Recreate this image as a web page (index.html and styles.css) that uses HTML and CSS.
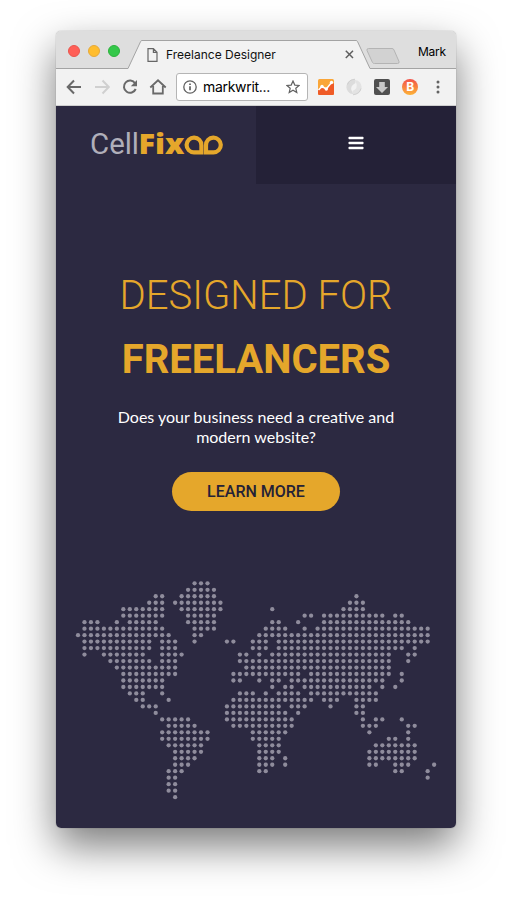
FILE: index.html
```html
<!DOCTYPE html>
<html lang="en">
<head>
<meta charset="utf-8">
<title>Freelance Designer</title>
<link rel="stylesheet" href="styles.css">
</head>
<body>
<div class="window">
  <header class="tabbar">
    <svg class="tab-shape" width="400" height="38" viewBox="0 0 400 38">
      <path d="M0 37.5H72L84.600 15.500Q85 14.500 86 14.500H300Q301 14.500 301.500 15.500L314 37.500H400V38H0Z" fill="#f2f2f2"/>
      <path d="M0 37.500H72L84.600 10.500Q85 9.500 86 9.500H300Q301 9.500 301.500 10.500L314 37.500H400" fill="#f2f2f2" stroke="#a3a3a3"/>
      <path d="M312.500 17.500H336Q337.500 17.500 338 19L343 30.500Q343.500 32.500 341.500 32.500H318.500Q317 32.500 316.500 31.500L311 19.500Q310.500 17.500 312.500 17.500Z" fill="#d2d2d2" stroke="#b4b4b4"/>
    </svg>
    <div class="lights"><i class="light red"></i><i class="light yellow"></i><i class="light green"></i></div>
    <div class="tab">
      <svg width="11" height="14" viewBox="0 0 11 14" fill="none" stroke="#666" stroke-width="1.200"><path d="M1 .7H6.400L10 4.300V13.300H1ZM6.400 .7V4.300H10"/></svg>
      <span class="tab-title">Freelance Designer</span>
      <svg width="9" height="9" viewBox="0 0 9 9" stroke="#5f5f5f" stroke-width="1.500"><path d="M.8.8L8 8M8 .8L.8 8"/></svg>
    </div>
    <span class="profile">Mark</span>
  </header>
  <div class="toolbar">
    <svg class="nav-icons" width="116" height="36" viewBox="0 0 116 36" fill="none" stroke="#696969" stroke-width="2">
      <path d="M25 18H12M18 11.500L11.700 18L18 24.500"/>
      <path d="M39 18H52M46.500 11.500L52.800 18L46.500 24.500" stroke="#d0d0d0"/>
      <path d="M79.100 14.200A6.100 6.100 0 1 0 79.700 20"/>
      <path d="M81 11V17.200H74.800Z" fill="#696969" stroke="none"/>
      <path d="M94.300 18.500L102 11.300L109.700 18.500M97.200 17V24.500H106.800V17" stroke-width="1.800"/>
    </svg>
    <div class="address">
      <svg width="14" height="14" viewBox="0 0 14 14" fill="none" stroke="#606060" stroke-width="1.300"><circle cx="7" cy="7" r="6.200"/><path d="M7 6.200V10.300M7 3.500V5.100" stroke-width="1.700"/></svg>
      <span class="url">markwrit...</span>
      <svg width="14" height="14" viewBox="0 0 14 14" fill="none" stroke="#616161" stroke-width="1.200"><path d="M7 1L8.800 5.100L13.100 5.500L9.800 8.300L10.800 12.600L7 10.300L3.200 12.600L4.200 8.300L.9 5.500L5.200 5.100Z"/></svg>
    </div>
    <svg class="extensions" width="148" height="36" viewBox="0 0 148 36">
      <rect x="10" y="10" width="16" height="16" rx="1.500" fill="#faa638"/>
      <path d="M10 21L14 17.500L18 20L24 13L26 15V24.500Q26 26 24.500 26H11.500Q10 26 10 24.500Z" fill="#ef5b27"/>
      <path d="M10.500 21L14 17.500L18.300 20L23.500 13.500" fill="none" stroke="#fff" stroke-width="1.500"/>
      <g fill="#fff"><circle cx="14" cy="17.500" r="1.700"/><circle cx="18.300" cy="20" r="1.700"/><circle cx="23.500" cy="13.500" r="1.700"/></g>
      <path d="M47 10.200C40 9.500 36 17 40 22.500Q42 25.300 45.500 25L43.800 22Q41.500 17 47.500 14Z" fill="#dcdcdc"/>
      <path d="M45 25.800C52 26.500 56 19 52 13.500Q50 10.700 46.500 11L48.200 14Q50.500 19 44.500 22Z" fill="#e3e3e3"/>
      <path d="M47 10.200Q41 10.500 39.500 15.500M45 25.800Q51.500 25 53 19.500" fill="none" stroke="#c9c9c9" stroke-width=".7"/>
      <rect x="66" y="10" width="16" height="16" rx="2" fill="#505050"/>
      <path d="M71.200 13H76.800V18H80L74 24L68 18H71.200Z" fill="#c9c9c9"/>
      <defs><linearGradient id="coin" x1="0" y1="0" x2="0" y2="1"><stop offset="0" stop-color="#f2524b"/><stop offset="1" stop-color="#fdb337"/></linearGradient></defs>
      <circle cx="102" cy="18" r="8" fill="url(#coin)"/>
      <text x="102.200" y="22.300" class="coin-letter">B</text>
      <g fill="#636363"><circle cx="130" cy="13" r="1.500"/><circle cx="130" cy="18" r="1.500"/><circle cx="130" cy="23" r="1.500"/></g>
    </svg>
  </div>
  <main class="page">
    <nav class="site-nav">
      <div class="brand">
        <svg width="138" height="52" viewBox="0 -12 138 52">
          <text class="logo-cell" x="0" y="26" textLength="49" lengthAdjust="spacingAndGlyphs">Cell</text>
          <text class="logo-fix" x="48.500" y="26" textLength="46" lengthAdjust="spacingAndGlyphs">Fix</text>
          <g fill="none" stroke="#e5a72b" stroke-width="4.200"><path d="M111.400 24.400H103.900A7.400 7.400 0 1 1 111.400 17.200Z"/><path d="M116 24.400V17.200A7.400 7.400 0 1 1 123.500 24.400Z"/></g>
        </svg>
      </div>
      <div class="menu"><svg width="16" height="14" viewBox="0 0 16 14" fill="#fff"><rect x=".5" y=".7" width="15" height="2.600" rx=".7"/><rect x=".5" y="5.700" width="15" height="2.600" rx=".7"/><rect x=".5" y="10.700" width="15" height="2.600" rx=".7"/></svg></div>
    </nav>
    <section class="hero">
      <h1 class="headline"><span class="thin">DESIGNED FOR</span><span class="bold">FREELANCERS</span></h1>
      <p class="intro">Does your business need a creative and<br>modern website?</p>
      <a class="cta">LEARN MORE</a>
      <svg class="map" id="map" width="362" height="222" viewBox="0 0 362 222"></svg>
    </section>
  </main>
</div>
<script src="map.js"></script>
</body>
</html>
```
FILE: styles.css
```css
* { box-sizing: border-box; }
body { display: flow-root; margin: 0; height: 908px; background: #fff; overflow: hidden; font-family: Inter, "Liberation Sans", sans-serif; }
.window { width: 400px; height: 797px; margin: 31px 0 0 56px; border-radius: 5px; box-shadow: 0 0 1px rgba(0,0,0,.5), 0 18px 42px rgba(0,0,0,.52); }
.tabbar { position: relative; display: flex; height: 38px; background: #dedede; border-radius: 5px 5px 0 0; }
.tab-shape { position: absolute; left: 0; top: 0; }
.lights { position: relative; display: flex; gap: 8px; padding: 14px 0 0 12px; width: 91px; }
.light { width: 12px; height: 12px; border-radius: 50%; border: 1px solid; }
.red { background: #ff5f57; border-color: #e9554d; }
.yellow { background: #ffbd2e; border-color: #e6a93a; }
.green { background: #34c84a; border-color: #2cb23c; }
.tab { position: relative; display: flex; align-items: center; width: 207px; height: 29px; margin-top: 9px; }
.tab-title { margin-left: 8px; width: 179px; font-size: 12px; line-height: 15px; color: #111; white-space: nowrap; }
.profile { position: relative; margin: 13px 0 0 64px; font-size: 12px; line-height: 15px; letter-spacing: -.3px; color: #000; }
.toolbar { display: flex; align-items: center; height: 37px; background: #f2f2f2; border-bottom: 1px solid #cfcfcf; }
.nav-icons { flex: none; }
.address { display: flex; align-items: center; width: 132px; height: 28px; margin-left: 4px; padding-left: 6px; background: #fff; border: 1px solid #b5b5b5; border-radius: 3px; }
.url { width: 83px; margin-left: 6px; font-size: 14px; letter-spacing: -.3px; line-height: 18px; color: #000; }
.address svg, .tab svg { flex: none; }
.extensions { flex: none; }
.coin-letter { font: bold 12px Inter, sans-serif; fill: #fff; text-anchor: middle; }
.page { height: 722px; background: #2c2941; border-radius: 0 0 5px 5px; }
.site-nav { display: grid; grid-template-columns: 1fr 1fr; height: 78px; }
.brand { padding: 10px 0 0 34px; }
.brand svg { display: block; }
.menu { display: flex; align-items: center; justify-content: center; background: #242137; padding-bottom: 4px; }
.logo-cell { font: 400 29px Roboto, sans-serif; fill: #b0afba; }
.logo-fix { font: 800 29px "Open Sans", sans-serif; fill: #e5a72b; }
.hero { display: flex; flex-direction: column; align-items: center; padding-top: 80px; }
.headline { display: flex; flex-direction: column; align-items: center; margin: 0; font-family: Roboto, sans-serif; font-size: 40px; line-height: 64px; color: #e5a72b; white-space: nowrap; }
.thin { font-weight: 300; }
.bold { font-weight: 700; }
.intro { margin: 15px 0 0; font: 16px/20px Lato, sans-serif; color: #fff; text-align: center; }
.cta { width: 168px; height: 39px; margin-top: 25px; border-radius: 20px; background: #e5a72b; color: #242137; font: 500 16px/39px Roboto, sans-serif; text-align: center; }
.map { margin-top: 67px; fill: #8f8c9c; }
```
FILE: map.js
```js
// Filled column spans of the dotted world map, one string per row.
const rows = [
  "18-20", "17-21", "12-13 16-21 43", "11-13 15-22 42-44",
  "7-13 16-22 30 41-44", "7-13 17-21 35-36 38-47 49-50",
  "1-3 6 8-12 17-21 30-31 34 38-51", "1-13 18-21 29-32 35 37-54",
  "0-14 18-19 28-54", "1-11 13-15 18 23-24 27-29 31-54",
  "1-11 13-15 27-29 31-50 52", "1 4-10 13-16 25-26 28 30-48 51-52",
  "5-11 13-15 25-48 51", "6-15 26-48", "7-15 24-34 36-48 50",
  "7-13 24-25 28 30-31 33-47 50", "7-13 30 32-33 35-45 47 49",
  "8-10 13 25-27 29 31-34 36-46", "9-10 14 24-36 38-40 43-46",
  "10-12 23-31 33-35 39 43-44", "12 23-32 34 43-44",
  "13-17 23-33 44 46-47 50", "14-18 24-33 44-46 51-52",
  "13-20 27-32 45 51", "13-20 27-31 48-49 51", "14-19 28-31 46-52",
  "15-19 28-31 45-52", "15-18 28-30 32 45-52",
  "15-17 28-30 32 45-46 49-51 55", "14-16 28-29 49-50 54",
  "14-15 54", "14-15", "14-15", "15"
];
const map = document.getElementById("map");
rows.forEach((row, r) => {
  row.split(" ").forEach(span => {
    const [from, to = from] = span.split("-").map(Number);
    for (let c = from; c <= to; c++) {
      const dot = document.createElementNS("http://www.w3.org/2000/svg", "circle");
      dot.setAttribute("cx", (3 + c * 6.475).toFixed(2));
      dot.setAttribute("cy", (5.3 + r * 6.48).toFixed(2));
      dot.setAttribute("r", 2.15);
      map.appendChild(dot);
    }
  });
});
```
